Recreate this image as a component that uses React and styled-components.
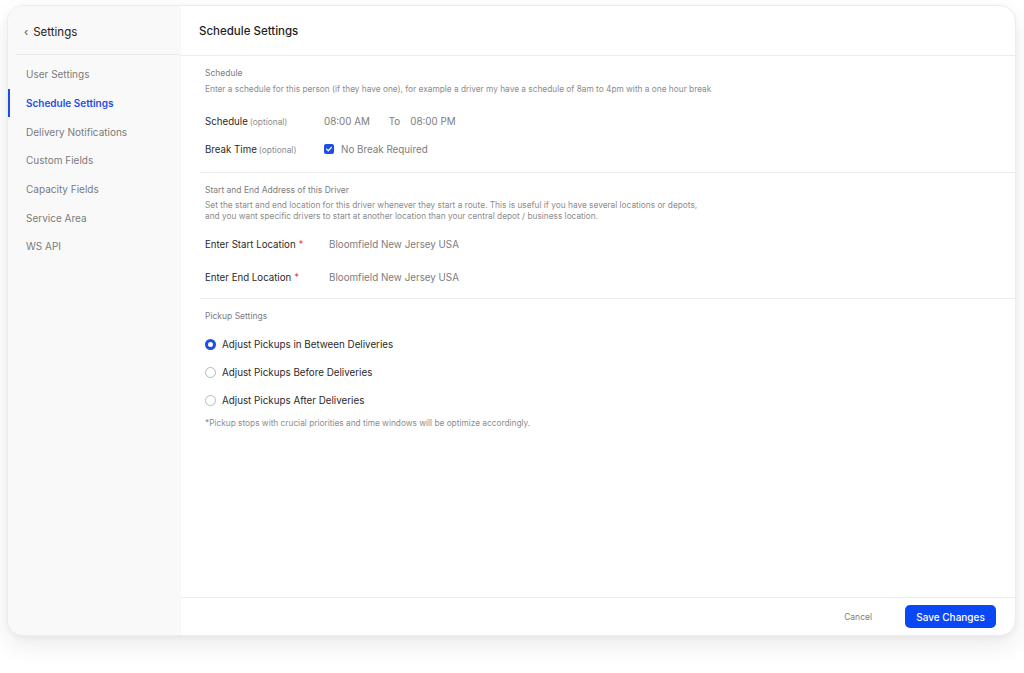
import React, { useState } from "react";
import styled, { createGlobalStyle } from "styled-components";

const GlobalStyle = createGlobalStyle`
  html, body {
    margin: 0;
    padding: 0;
    background: #ffffff;
  }
  body {
    font-family: "Inter", "Noto Sans", sans-serif;
    color: #2b2b2b;
    -webkit-font-smoothing: antialiased;
  }
`;

const Page = styled.div`
  width: 1024px;
  height: 673px;
  padding: 5px 8px 0 7px;
  box-sizing: border-box;
  background: #ffffff;
`;

const Card = styled.div`
  width: 1009px;
  height: 631px;
  display: flex;
  border-radius: 16px;
  overflow: hidden;
  background: #ffffff;
  border: 1px solid #ececec;
  box-sizing: border-box;
  box-shadow: 0 10px 24px rgba(0, 0, 0, 0.08), 0 2px 6px rgba(0, 0, 0, 0.04);
`;

const Sidebar = styled.aside`
  width: 173px;
  flex-shrink: 0;
  background: #f9f9f9;
  display: flex;
  flex-direction: column;
`;

const SideHeader = styled.div`
  height: 49px;
  margin-left: 8px;
  border-bottom: 1px solid #ececec;
  display: flex;
  align-items: center;
  gap: 5px;
  padding-left: 8px;
  padding-top: 4px;
  box-sizing: border-box;
  font-size: 11.5px;
  color: #222;
`;

const Chevron = styled.span`
  font-size: 11px;
  color: #555;
  line-height: 1;
  margin-top: 1px;
`;

const NavList = styled.nav`
  display: flex;
  flex-direction: column;
  padding-top: 5px;
`;

const NavItem = styled.a`
  position: relative;
  height: 28.7px;
  display: flex;
  align-items: center;
  padding-left: 18px;
  font-size: 10px;
  font-weight: ${(p) => (p.$active ? 600 : 400)};
  color: ${(p) => (p.$active ? "#1d4ee6" : "#7b7b7b")};
  cursor: pointer;
  text-decoration: none;

  &::before {
    content: "";
    display: ${(p) => (p.$active ? "block" : "none")};
    position: absolute;
    left: 0;
    top: 0;
    bottom: 0;
    width: 2px;
    background: #1d4ee6;
  }
`;

const Main = styled.main`
  flex: 1;
  display: flex;
  flex-direction: column;
`;

const MainHeader = styled.header`
  height: 50px;
  border-bottom: 1px solid #ececec;
  display: flex;
  align-items: center;
  padding-left: 18px;
  box-sizing: border-box;
  font-size: 11.5px;
  font-weight: 500;
  color: #1e1e1e;
`;

const Content = styled.div`
  flex: 1;
`;

const Section = styled.section`
  margin-left: 19px;
  padding: ${(p) => p.$pad || "11px 5px 9px"};
  border-bottom: ${(p) => (p.$last ? "none" : "1px solid #ececec")};
`;

const SectionTitle = styled.div`
  font-size: 8.5px;
  line-height: 12px;
  color: #7d7d7d;
`;

const Description = styled.p`
  margin: 4px 0 0;
  font-size: 8.3px;
  line-height: ${(p) => p.$lh || "12px"};
  color: #8c8c8c;
`;

const Rows = styled.div`
  margin-top: ${(p) => p.$gap || "12px"};
  display: flex;
  flex-direction: column;
`;

const Row = styled.div`
  height: ${(p) => p.$h || "28px"};
  display: flex;
  align-items: center;
`;

const Label = styled.div`
  width: ${(p) => p.$w || "119px"};
  flex-shrink: 0;
  font-size: 9.7px;
  color: #2a2a2a;
`;

const Optional = styled.span`
  font-size: 8.4px;
  color: #8c8c8c;
  margin-left: 2px;
`;

const Required = styled.span`
  color: #e0485a;
  margin-left: 3px;
`;

const Value = styled.span`
  font-size: 9.8px;
  color: #7d7d7d;
  margin-right: ${(p) => p.$mr || "0"};
`;

const CheckLabel = styled.label`
  display: flex;
  align-items: center;
  gap: 7px;
  font-size: 9.8px;
  color: #7d7d7d;
  cursor: pointer;
`;

const CheckBox = styled.span`
  width: 10px;
  height: 10px;
  border-radius: 2px;
  background: #1d4ee6;
  display: flex;
  align-items: center;
  justify-content: center;
`;

const RadioRow = styled.label`
  height: 28px;
  display: flex;
  align-items: center;
  gap: 6px;
  font-size: 9.8px;
  color: #2a2a2a;
  cursor: pointer;
`;

const Radio = styled.span`
  width: 11px;
  height: 11px;
  box-sizing: border-box;
  border-radius: 50%;
  border: ${(p) => (p.$checked ? "3px solid #1d4ee6" : "1px solid #b9b9b9")};
  background: #ffffff;
`;

const Note = styled.p`
  margin: 3px 0 0;
  font-size: 8.3px;
  line-height: 12px;
  color: #8c8c8c;
`;

const Footer = styled.footer`
  height: 38px;
  border-top: 1px solid #ececec;
  display: flex;
  align-items: center;
  justify-content: flex-end;
  gap: 33px;
  padding-right: 19px;
  box-sizing: border-box;
`;

const CancelButton = styled.button`
  border: none;
  background: none;
  padding: 0;
  font-family: inherit;
  font-size: 8.5px;
  color: #7d7d7d;
  cursor: pointer;
`;

const SaveButton = styled.button`
  width: 91px;
  height: 23px;
  border: none;
  border-radius: 5px;
  background: #0a47f5;
  color: #ffffff;
  font-family: inherit;
  font-size: 10px;
  font-weight: 500;
  cursor: pointer;
`;

const navItems = [
  "User Settings",
  "Schedule Settings",
  "Delivery Notifications",
  "Custom Fields",
  "Capacity Fields",
  "Service Area",
  "WS API",
];

const pickupOptions = [
  "Adjust Pickups in Between Deliveries",
  "Adjust Pickups Before Deliveries",
  "Adjust Pickups After Deliveries",
];

export default function App() {
  const [pickup, setPickup] = useState(0);

  return (
    <>
      <GlobalStyle />
      <Page>
        <Card>
          <Sidebar>
            <SideHeader>
              <Chevron>‹</Chevron>
              Settings
            </SideHeader>
            <NavList>
              {navItems.map((item) => (
                <NavItem key={item} $active={item === "Schedule Settings"}>
                  {item}
                </NavItem>
              ))}
            </NavList>
          </Sidebar>

          <Main>
            <MainHeader>Schedule Settings</MainHeader>
            <Content>
              <Section>
                <SectionTitle>Schedule</SectionTitle>
                <Description>
                  Enter a schedule for this person (if they have one), for example a driver my
                  have a schedule of 8am to 4pm with a one hour break
                </Description>
                <Rows>
                  <Row>
                    <Label>
                      Schedule<Optional>(optional)</Optional>
                    </Label>
                    <Value $mr="19px">08:00 AM</Value>
                    <Value $mr="10px">To</Value>
                    <Value>08:00 PM</Value>
                  </Row>
                  <Row>
                    <Label>
                      Break Time<Optional>(optional)</Optional>
                    </Label>
                    <CheckLabel>
                      <CheckBox>
                        <svg width="8" height="8" viewBox="0 0 8 8">
                          <path
                            d="M1.6 4.1 L3.3 5.7 L6.4 2.4"
                            fill="none"
                            stroke="#fff"
                            strokeWidth="1.3"
                            strokeLinecap="round"
                            strokeLinejoin="round"
                          />
                        </svg>
                      </CheckBox>
                      No Break Required
                    </CheckLabel>
                  </Row>
                </Rows>
              </Section>

              <Section $pad="11px 5px 4px">
                <SectionTitle>Start and End Address of this Driver</SectionTitle>
                <Description $lh="11px">
                  Set the start and end location for this driver whenever they start a route.
                  This is useful if you have several locations or depots,
                  <br />
                  and you want specific drivers to start at another location than your central
                  depot / business location.
                </Description>
                <Rows $gap="6px">
                  <Row $h="33px">
                    <Label $w="124px">
                      Enter Start Location<Required>*</Required>
                    </Label>
                    <Value>Bloomfield New Jersey USA</Value>
                  </Row>
                  <Row $h="33px">
                    <Label $w="124px">
                      Enter End Location<Required>*</Required>
                    </Label>
                    <Value>Bloomfield New Jersey USA</Value>
                  </Row>
                </Rows>
              </Section>

              <Section $pad="11px 0 0 5px" $last>
                <SectionTitle>Pickup Settings</SectionTitle>
                <Rows $gap="8px">
                  {pickupOptions.map((opt, i) => (
                    <RadioRow key={opt} onClick={() => setPickup(i)}>
                      <Radio $checked={pickup === i} />
                      {opt}
                    </RadioRow>
                  ))}
                </Rows>
                <Note>
                  *Pickup stops with crucial priorities and time windows will be optimize
                  accordingly.
                </Note>
              </Section>
            </Content>
            <Footer>
              <CancelButton>Cancel</CancelButton>
              <SaveButton>Save Changes</SaveButton>
            </Footer>
          </Main>
        </Card>
      </Page>
    </>
  );
}
